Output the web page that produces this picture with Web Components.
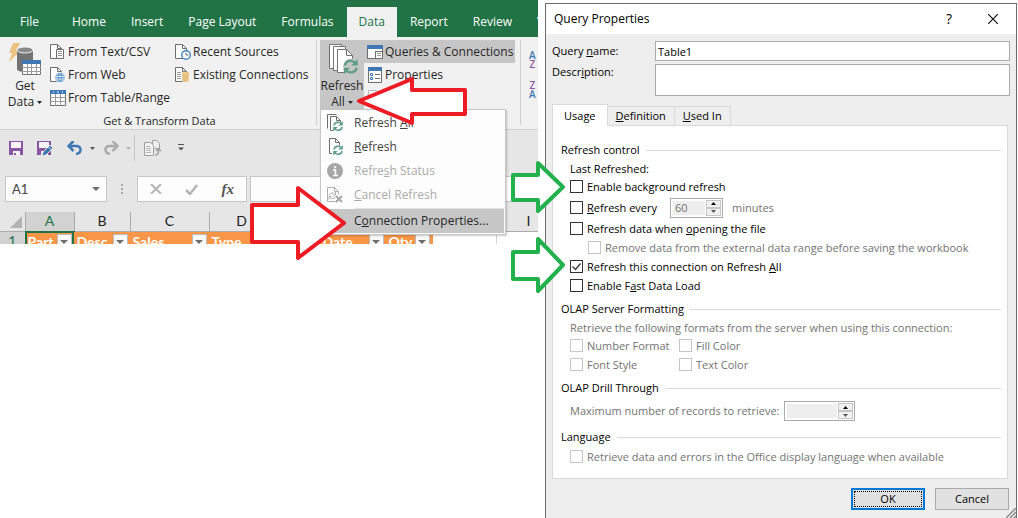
<!DOCTYPE html>
<html lang="en">
<head>
<meta charset="utf-8">
<meta name="viewport" content="width=device-width, initial-scale=1">
<title>Query Properties</title>
<style>
	html, body {
		margin: 0;
		min-height: 100%;
		background: #fff;
		color: #262626;
		font-family: "Open Sans", "Noto Sans", sans-serif;
		font-size: 12px;
		line-height: 16px;
	}
</style>
</head>
<body>
<app-page></app-page>

<script>
// Shared base, fills an open shadow root from the class's styles and markup
class BaseElement extends HTMLElement {
	constructor() {
		super();
		const shadowDom = this.attachShadow({ mode: "open" });
		const template = document.createElement("template");
		template.innerHTML =
			"<style>* { box-sizing: border-box; } " +
			"button, input, textarea { font: inherit; color: inherit; margin: 0; } " +
			"button { background: none; border: 0; padding: 0; } " +
			"svg { display: block; flex: none; } " +
			this.constructor.styles + "</style>" + this.constructor.markup;
		shadowDom.appendChild(template.content.cloneNode(true));
	}
}

// Icons by name: [width, height, svg content]
const doc = '<path d="M.5.5h7l4 4v10h-11z" fill="#fff" stroke="#6d6d6d"/><path d="M7.5.5v4h4" fill="none" stroke="#6d6d6d"/>';
const refreshArrows = '<path d="M1 4.500C1.600 1 6 .2 8.300 2.800M9 6C8.400 9.500 4 10.300 1.700 7.700" fill="none" stroke="#5f9e86" stroke-width="1.600"/><path d="M9.800 0v4.500H5.300zM.2 10.500V6h4.500z" fill="#5f9e86"/>';
const ICONS = {
	getdata: [32, 32, '<path d="M4 0h7L7 8h4L0 19l3-9H0z" fill="#eac282"/><path d="M8 7v19c0 2 4 3 8 3s8-1 8-3V7z" fill="#737373"/><ellipse cx="16" cy="7" rx="8" ry="3" fill="#8a8a8a" stroke="#f1f1f1"/><path d="M13.500 17.500h18v14h-18z" fill="#fff" stroke="#737373"/><path d="M13 17h19v4H13z" fill="#3f78b5"/><path d="M13 24.500h19M13 28.500h19M18.500 21v10M22.500 21v10M27.500 21v10" stroke="#9b9b9b" fill="none"/>'],
	csv: [16, 16, '<g>' + doc + '</g><path d="M6.500 5.500h7v9h-7z" fill="#fff" stroke="#6d6d6d"/><path d="M8 7.500h4M8 9.500h4M8 11.500h4" stroke="#8f8f8f"/>'],
	web: [16, 16, doc + '<circle cx="10" cy="10.500" r="5" fill="#3f86c6" stroke="#f1f1f1"/><path d="M6 9.500h8M6 12h8M10 6v9M8 7c-1.500 2-1.500 5 0 7M12 7c1.500 2 1.500 5 0 7" stroke="#fff" stroke-width=".7" fill="none"/>'],
	table: [16, 16, '<path d="M.5.5h15v15H.5z" fill="#fff" stroke="#6d6d6d"/><path d="M0 0h16v4H0z" fill="#3f78b5"/><path d="M3 2h1M7 2h2M12 2h1" stroke="#fff"/><path d="M0 7.500h16M0 11.500h16M5.500 4v12M10.500 4v12" stroke="#9b9b9b"/>'],
	recent: [16, 16, doc + '<circle cx="11" cy="11" r="4.300" fill="#fff" stroke="#3f86c6" stroke-width="1.400"/><path d="M11 8.500V11h2.500" fill="none" stroke="#6d6d6d"/>'],
	existing: [16, 16, doc + '<path d="M2 5.500h4M2 7.500h4M2 9.500h4M2 11.500h4" stroke="#9b9b9b"/><path d="M7 6.500v7c0 2 7 2 7 0v-7z" fill="#e9c07b" stroke="#f1f1f1" stroke-width=".5"/><ellipse cx="10.500" cy="6.500" rx="3.500" ry="1.500" fill="#f0d19b" stroke="#d9a956" stroke-width=".5"/>'],
	refreshbig: [32, 32, '<path d="M3.500 1.500h12v24h-12z" fill="#fff" stroke="#737373"/><path d="M7.500 3.500h12v24h-12z" fill="#fff" stroke="#737373"/><path d="M11.500 6.500h9l6 6v17h-15z" fill="#fff" stroke="#737373"/><path d="M20.500 6.500v6h6" fill="none" stroke="#737373"/><circle cx="25" cy="23.500" r="8" fill="#c6c6c6"/><g transform="translate(17.500 16) scale(1.450)">' + refreshArrows + '</g>'],
	queries: [16, 14, '<path d="M.5.500h15v13H.5z" fill="#fff" stroke="#6d6d6d"/><path d="M0 0h16v4H0z" fill="#3f78b5"/><path d="M8.500 6v8M8 6.500h8" stroke="#6d6d6d"/><path d="M10 8.500h4M10 10.500h4" stroke="#9b9b9b"/>'],
	properties: [14, 16, '<path d="M.5.500h13v15H.5z" fill="#fff" stroke="#6d6d6d"/><path d="M0 0h14v4H0z" fill="#3f78b5"/><path d="M2.500 6.500h2v2h-2zM2.500 10.500h2v2h-2z" fill="none" stroke="#3f78b5"/><path d="M7 7.500h5M7 11.500h5" stroke="#6d6d6d"/>'],
	links: [14, 16, '<path d="M.5.500h8l4 4v10H.5z" fill="#fafafa" stroke="#b5b5b5"/><path d="M3 6.500h7M3 9.500h7" stroke="#c5c5c5"/>'],
	refreshall: [16, 18, '<path d="M.5 14.500V.500h9M6 16.500H3.500v-14h6l4 4v1.500M9.500 2.500v4h4" fill="none" stroke="#6d6d6d"/><g transform="translate(6 7)">' + refreshArrows + '</g>'],
	refresh: [16, 18, '<path d="M5 15.500H2.500V.5h6l4 4v3M8.500.5v4h4" fill="none" stroke="#6d6d6d"/><g transform="translate(6 7)">' + refreshArrows + '</g>'],
	info: [16, 16, '<circle cx="8" cy="8" r="8" fill="#a6a6a6"/><path d="M6 7h2.500v5M6 12.500h5" fill="none" stroke="#fff" stroke-width="1.500"/><path d="M7.200 3.200h2v2h-2z" fill="#fff"/>'],
	cancel: [16, 16, '<path d="M8 14.500H.5V.500h7l4 4v3M7.500.500v4h4" fill="none" stroke="#b0b0b0"/><path d="M2.500 8a2.800 2.800 0 0 1 5-1M8 9.500a2.800 2.800 0 0 1-5 1M8.500 5v3H6M2 12.500v-3h2.500" fill="none" stroke="#b0b0b0"/><path d="M9 9l6 6M15 9l-6 6" stroke="#a6a6a6" stroke-width="2"/>'],
	save: [14, 14, '<path d="M0 0h14v14H0z" fill="#8a55a5"/><path d="M2 1h10v6H2zM4 10h7v4H4z" fill="#f4f4f4"/><path d="M5 12h2v2H5z" fill="#8a55a5"/>'],
	saveas: [16, 15, '<path d="M0 0h14v14H0z" fill="#8a55a5"/><path d="M2 1h10v6H2zM4 10h7v4H4z" fill="#f4f4f4"/><path d="M5 15l1-4 7-7 3 3-7 7z" fill="#3f78b5" stroke="#e6e6e6"/><path d="M11.500 6l2.500 2.500" stroke="#e6e6e6"/>'],
	undo: [16, 14, '<path d="M2 5h7c6 0 6 7 0 8" fill="none" stroke="#3f78b5" stroke-width="2.500"/><path d="M6.500 0L1.500 5l5 5" fill="none" stroke="#3f78b5" stroke-width="2.500"/>'],
	redo: [16, 14, '<path d="M14 5H7c-6 0-6 7 0 8" fill="none" stroke="#ababab" stroke-width="2.500"/><path d="M9.500 0l5 5-5 5" fill="none" stroke="#ababab" stroke-width="2.500"/>'],
	paste: [18, 16, '<path d="M8.500 5V.500h4l3 3v5h-5" fill="#eee" stroke="#a0a0a0"/><path d="M.5 2.500h6l3 3v10H.5z" fill="#f3f3f3" stroke="#a0a0a0"/><path d="M2 6.500h4M2 8.500h5M2 10.500h5M2 12.500h5" stroke="#b5b5b5"/><path d="M11 15c3 0 4-2 3.500-6M12 11l2.500-2.500L17 11" fill="none" stroke="#a0a0a0" stroke-width="1.500"/>'],
	customize: [6, 8, '<path d="M0 .5h6" stroke="#555"/><path d="M0 3.500h6l-3 3z" fill="#555"/>'],
	caret: [5, 3, '<path d="M0 0h5L2.500 3z" fill="currentColor"/>'],
	bigcaret: [8, 4, '<path d="M0 0h8L4 4z" fill="#6d6d6d"/>'],
	cross: [12, 10, '<path d="M1 0l10 10M11 0L1 10" stroke="#b5b5b5" stroke-width="2"/>'],
	check: [13, 11, '<path d="M1 6l4 4 7-9" fill="none" stroke="#b5b5b5" stroke-width="2.500"/>'],
	close: [10, 10, '<path d="M0 0l10 10M10 0L0 10" stroke="#111" stroke-width="1.200"/>']
};

// <app-icon name="save">
class AppIcon extends BaseElement {
	static styles = ":host { display: block; flex: none; }";
	static markup = "";
	static observedAttributes = ["name"];
	attributeChangedCallback() {
		const [w, h, body] = ICONS[this.getAttribute("name")];
		const old = this.shadowRoot.querySelector("svg");
		if (old) old.remove();
		this.shadowRoot.innerHTML += `<svg width="${w}" height="${h}" viewBox="0 0 ${w} ${h}" aria-hidden="true">${body}</svg>`;
	}
}
customElements.define("app-icon", AppIcon);

// Block arrow, one shape per variant
class CalloutArrow extends BaseElement {
	static styles = `
		:host { display: block; position: absolute; z-index: 5; pointer-events: none; }
		path { fill: #fff; stroke: currentColor; stroke-width: 4; stroke-linejoin: round; }
	`;
	static markup = "";
	connectedCallback() {
		const shapes = {
			menu: [112, 50, "M3 25L56 3V14H109V38H56V47Z"],
			item: [96, 76, "M2 20H48V3L94 38L48 73V57H2Z"],
			small: [56, 54, "M3 15H28V3L53 27L28 51V40H3Z"],
			large: [56, 58, "M3 16H28V3L53 29L28 55V43H3Z"]
		};
		const [w, h, d] = shapes[this.getAttribute("shape")];
		this.shadowRoot.innerHTML += `<svg width="${w}" height="${h}" viewBox="0 0 ${w} ${h}" aria-hidden="true"><path d="${d}"/></svg>`;
	}
}
customElements.define("callout-arrow", CalloutArrow);

class RibbonTabs extends BaseElement {
	static styles = `
		:host { display: block; background: #217346; color: #fff; padding-top: 7px; }
		nav { display: flex; gap: 1px; height: 30px; }
		button { padding: 0 12px; white-space: nowrap; }
		.file { padding: 0 20px; }
		.active { background: #f1f1f1; color: #217346; }
	`;
	static markup = `
		<nav aria-label="Ribbon">
			<button class="file">File</button><button>Home</button><button>Insert</button>
			<button>Page Layout</button><button>Formulas</button><button class="active">Data</button>
			<button>Report</button><button>Review</button><button>View</button>
		</nav>
	`;
}
customElements.define("ribbon-tabs", RibbonTabs);

// Small ribbon command, icon on the left
class RibbonCommand extends BaseElement {
	static styles = `
		:host { display: block; }
		:host([pressed]) { background: #c6c6c6; }
		button { display: flex; align-items: center; gap: 2px; height: 23px; padding: 0 2px; white-space: nowrap; }
		span { display: grid; place-items: center; width: 17px; }
	`;
	static markup = `<button><span><slot name="icon"></slot></span><slot></slot></button>`;
}
customElements.define("ribbon-command", RibbonCommand);

// Large ribbon command, icon above a two-line label
class RibbonLarge extends BaseElement {
	static styles = `
		:host { display: block; }
		:host([pressed]) { background: #c6c6c6; }
		button { display: flex; flex-direction: column; align-items: center; width: 44px; height: 69px; padding-top: 3px; }
		.label { padding-top: 3px; }
		.more { display: flex; align-items: center; gap: 3px; }
	`;
	static markup = `
		<button><slot name="icon"></slot><span class="label"><slot></slot></span>
		<span class="more"><slot name="more"></slot><app-icon name="caret"></app-icon></span></button>
	`;
}
customElements.define("ribbon-large", RibbonLarge);

class MenuItem extends BaseElement {
	static styles = `
		:host { display: block; color: #444; }
		:host([disabled]) { color: #ababab; }
		:host([active]) { background: #c6c6c6; color: #262626; }
		button { display: grid; grid-template-columns: 16px 1fr; gap: 11px; align-items: center; width: 100%; height: 24px; padding: 0 5px; text-align: left; white-space: nowrap; }
		.icon { display: grid; place-items: center; }
	`;
	static markup = `<button role="menuitem"><span class="icon"><slot name="icon"></slot></span><span><slot></slot></span></button>`;
}
customElements.define("menu-item", MenuItem);

class RefreshMenu extends BaseElement {
	static styles = `
		:host { display: block; width: 186px; padding: 1px; background: #fdfdfd; border: 1px solid #c6c6c6; box-shadow: 1px 1px 2px #0003; }
		hr { border: 0; border-top: 1px solid #e1e1e1; margin: 1px 0 0 33px; }
	`;
	static markup = `
		<div role="menu" aria-label="Refresh All">
			<menu-item><app-icon slot="icon" name="refreshall"></app-icon>Refresh <u>A</u>ll</menu-item>
			<menu-item><app-icon slot="icon" name="refresh"></app-icon><u>R</u>efresh</menu-item>
			<menu-item disabled><app-icon slot="icon" name="info"></app-icon>Refre<u>s</u>h Status</menu-item>
			<menu-item disabled><app-icon slot="icon" name="cancel"></app-icon><u>C</u>ancel Refresh</menu-item>
			<hr>
			<menu-item active>C<u>o</u>nnection Properties...</menu-item>
		</div>
	`;
}
customElements.define("refresh-menu", RefreshMenu);

class RibbonPanel extends BaseElement {
	static styles = `
		:host { display: block; background: #f1f1f1; border-bottom: 1px solid #d0d0d0; }
		.groups { display: flex; height: 92px; padding-top: 3px; }
		.group { flex: none; border-right: 1px solid #d0d0d0; margin-bottom: 4px; }
		.transform { width: 317px; padding-left: 3px; }
		.connections { position: relative; width: 204px; padding-left: 3px; }
		.row { display: flex; }
		.first { width: 125px; }
		.title { text-align: center; font-size: 11px; line-height: 24px; margin: 0; }
		refresh-menu { position: absolute; z-index: 3; left: 3px; top: 69px; }
		.sort { display: grid; align-content: start; gap: 12px; padding: 11px 0 0 8px; font-size: 10px; line-height: 9px; }
		.sort button { display: grid; font-weight: 600; }
		.a { color: #3f78b5; }
		.z { color: #8a55a5; }
	`;
	static markup = `
		<div class="groups">
			<section class="group transform">
				<div class="row">
					<ribbon-large><app-icon slot="icon" name="getdata"></app-icon>Get<span slot="more">Data</span></ribbon-large>
					<div class="first">
						<ribbon-command><app-icon slot="icon" name="csv"></app-icon>From Text/CSV</ribbon-command>
						<ribbon-command><app-icon slot="icon" name="web"></app-icon>From Web</ribbon-command>
						<ribbon-command><app-icon slot="icon" name="table"></app-icon>From Table/Range</ribbon-command>
					</div>
					<div>
						<ribbon-command><app-icon slot="icon" name="recent"></app-icon>Recent Sources</ribbon-command>
						<ribbon-command><app-icon slot="icon" name="existing"></app-icon>Existing Connections</ribbon-command>
					</div>
				</div>
				<p class="title">Get &amp; Transform Data</p>
			</section>
			<section class="group connections">
				<div class="row">
					<ribbon-large pressed><app-icon slot="icon" name="refreshbig"></app-icon>Refresh<span slot="more">All</span></ribbon-large>
					<div>
						<ribbon-command pressed><app-icon slot="icon" name="queries"></app-icon>Queries &amp; Connections</ribbon-command>
						<ribbon-command><app-icon slot="icon" name="properties"></app-icon>Properties</ribbon-command>
						<ribbon-command aria-label="Edit Links"><app-icon slot="icon" name="links"></app-icon></ribbon-command>
					</div>
				</div>
				<refresh-menu></refresh-menu>
			</section>
			<section class="sort">
				<button aria-label="Sort A to Z"><span class="a">A</span><span class="z">Z</span></button>
				<button aria-label="Sort Z to A"><span class="z">Z</span><span class="a">A</span></button>
			</section>
		</div>
	`;
}
customElements.define("ribbon-panel", RibbonPanel);

class QuickAccess extends BaseElement {
	static styles = `
		:host { display: flex; align-items: center; height: 36px; padding-left: 9px; color: #555; }
		button { display: flex; align-items: center; gap: 7px; margin-right: 14px; }
		.undo { margin-right: 8px; }
		.off { color: #b5b5b5; margin-right: 3px; }
		i { width: 1px; height: 26px; background: #c6c6c6; margin-right: 9px; }
		.paste { margin-right: 16px; }
	`;
	static markup = `
		<button aria-label="Save"><app-icon name="save"></app-icon></button>
		<button aria-label="Save As"><app-icon name="saveas"></app-icon></button>
		<button class="undo" aria-label="Undo"><app-icon name="undo"></app-icon><app-icon name="caret"></app-icon></button>
		<button class="off" aria-label="Redo"><app-icon name="redo"></app-icon><app-icon name="caret"></app-icon></button>
		<i></i>
		<button class="paste" aria-label="Paste"><app-icon name="paste"></app-icon></button>
		<button aria-label="Customize"><app-icon name="customize"></app-icon></button>
	`;
}
customElements.define("quick-access", QuickAccess);

class FormulaBar extends BaseElement {
	static styles = `
		:host { display: flex; height: 26px; margin: 10px 0; padding-left: 5px; }
		.name, .tools, .formula { background: #fdfdfd; border: 1px solid #c6c6c6; }
		.name { display: flex; align-items: center; width: 102px; padding: 0 6px; font-family: Lato, sans-serif; font-size: 13px; }
		.name input { flex: 1; min-width: 0; border: 0; padding: 0; background: none; color: #444; }
		.dots { width: 30px; display: grid; place-items: center; }
		.tools { display: flex; align-items: center; justify-content: space-between; width: 110px; padding: 0 12px; margin-right: 3px; }
		.fx { font: italic bold 15px "Liberation Serif", serif; color: #555; }
		.formula { flex: 1; min-width: 0; border-right: 0; }
	`;
	static markup = `
		<div class="name"><input aria-label="Name Box" value="A1"><app-icon name="bigcaret"></app-icon></div>
		<div class="dots"><svg width="2" height="10" aria-hidden="true"><path d="M0 0h2v2H0zM0 4h2v2H0zM0 8h2v2H0z" fill="#ababab"/></svg></div>
		<div class="tools">
			<button aria-label="Cancel"><app-icon name="cross"></app-icon></button>
			<button aria-label="Enter"><app-icon name="check"></app-icon></button>
			<button class="fx" aria-label="Insert Function">fx</button>
		</div>
		<input class="formula" aria-label="Formula">
	`;
}
customElements.define("formula-bar", FormulaBar);

class SheetGrid extends BaseElement {
	static styles = `
		:host { display: block; height: 32px; overflow: hidden; font-family: Lato, sans-serif; }
		table { border-collapse: collapse; table-layout: fixed; width: 561px; background: #fff; }
		th, td { padding: 0; border-right: 1px solid #d4d4d4; overflow: hidden; }
		thead th { height: 19px; background: #e6e6e6; border-right-color: #ababab; border-bottom: 1px solid #ababab; font-weight: 400; font-size: 14px; color: #222; }
		thead .on, tbody th { background: #d2d2d2; color: #217346; }
		.on { border-bottom-color: #217346; }
		.corner svg { margin: 2px 3px 0 auto; }
		tbody th { font-weight: 400; font-size: 14px; line-height: 18px; vertical-align: top; }
		.head { background: #f79646; color: #fff; border-color: #f79646; }
		.head div { display: flex; justify-content: space-between; padding: 1px 2px 0; height: 22px; font-size: 14px; font-weight: 700; line-height: 18px; }
		.head button { display: grid; place-items: center; width: 15px; height: 16px; margin-top: 1px; background: #fafafa; border: 1px solid #bbb; }
		.selected { outline: 2px solid #217346; outline-offset: -2px; }
	`;
	static markup = `
		<table>
			<colgroup><col style="width:25px"><col style="width:49px"><col style="width:56px"><col style="width:79px"><col style="width:65px"><col style="width:46px"><col style="width:66px"><col style="width:46px"><col style="width:64px"><col style="width:65px"></colgroup>
			<thead><tr><th class="corner"><svg width="12" height="12" aria-hidden="true"><path d="M12 0v12H0z" fill="#b3b3b3"/></svg></th><th class="on">A</th><th>B</th><th>C</th><th>D</th><th></th><th></th><th></th><th></th><th>I</th></tr></thead>
			<tbody><tr><th>1</th></tr></tbody>
		</table>
	`;
	connectedCallback() {
		const row = this.shadowRoot.querySelector("tbody tr");
		for (const name of ["Part", "Desc", "Sales", "Type", "", "Date", "Qty"]) {
			const cell = document.createElement("td");
			cell.className = name === "Part" ? "head selected" : "head";
			cell.innerHTML = `<div>${name}<button aria-label="Filter ${name}"><app-icon name="bigcaret"></app-icon></button></div>`;
			row.appendChild(cell);
		}
		row.append(document.createElement("td"), document.createElement("td"));
	}
}
customElements.define("sheet-grid", SheetGrid);

class ExcelWindow extends BaseElement {
	static styles = `
		:host { display: block; position: relative; }
		.window { background: #e6e6e6; overflow: hidden; }
		callout-arrow { color: #ed1c24; }
		.to-menu { left: 356px; top: 76px; }
		.to-item { left: 250px; top: 185px; }
	`;
	static markup = `
		<div class="window">
			<ribbon-tabs></ribbon-tabs>
			<ribbon-panel></ribbon-panel>
			<quick-access></quick-access>
			<formula-bar></formula-bar>
			<sheet-grid></sheet-grid>
		</div>
		<callout-arrow class="to-menu" shape="menu"></callout-arrow>
		<callout-arrow class="to-item" shape="item"></callout-arrow>
	`;
}
customElements.define("excel-window", ExcelWindow);

// <check-option checked disabled>Label</check-option>
class CheckOption extends BaseElement {
	static styles = `
		:host { display: block; }
		:host([disabled]) { color: #737373; }
		label { display: flex; align-items: center; gap: 4px; height: 19px; white-space: nowrap; }
		input { appearance: none; flex: none; width: 13px; height: 13px; border: 1px solid #333; background: #fff; }
		input:disabled { border-color: #c6c6c6; }
		input:checked { background: #fff url('data:image/svg+xml,<svg xmlns="http://www.w3.org/2000/svg" viewBox="0 0 11 11"><path d="M1.500 5.500l3 3 5-6" fill="none" stroke="%23333" stroke-width="1.300"/></svg>'); }
	`;
	static markup = `<label><input type="checkbox"><span><slot></slot></span></label>`;
	connectedCallback() {
		const input = this.shadowRoot.querySelector("input");
		input.checked = this.hasAttribute("checked");
		input.disabled = this.hasAttribute("disabled");
	}
}
customElements.define("check-option", CheckOption);

class NumberSpinner extends BaseElement {
	static styles = `
		:host { display: flex; width: 53px; height: 20px; padding: 1px; border: 1px solid #ababab; background: #fff; color: #737373; }
		:host([wide]) { width: 71px; }
		input { flex: 1; min-width: 0; padding: 0 2px; background: #eee; border: 1px solid #fff; }
		.steps { display: grid; grid-template-rows: 1fr 1fr; width: 15px; }
		button { display: grid; place-items: center; border: 1px solid #c6c6c6; background: #f1f1f1; color: #555; }
		.up { color: #000; }
		.up app-icon { rotate: 180deg; }
	`;
	static markup = `
		<input type="text" inputmode="numeric" disabled>
		<div class="steps">
			<button class="up" aria-label="Increase"><app-icon name="caret"></app-icon></button>
			<button aria-label="Decrease"><app-icon name="caret"></app-icon></button>
		</div>
	`;
	connectedCallback() {
		const input = this.shadowRoot.querySelector("input");
		input.value = this.getAttribute("value") || "";
		input.setAttribute("aria-label", this.getAttribute("label"));
	}
}
customElements.define("number-spinner", NumberSpinner);

// Titled section of the dialog with a rule after its title
class OptionGroup extends BaseElement {
	static styles = `
		:host { display: block; }
		h3 { display: flex; align-items: center; gap: 6px; margin: 0; font: inherit; line-height: 18px; color: #000; }
		h3::after { content: ""; flex: 1; height: 1px; background: #d9d9d9; }
		.content { padding-left: 9px; }
	`;
	static markup = `<h3><slot name="title"></slot></h3><div class="content"><slot></slot></div>`;
}
customElements.define("option-group", OptionGroup);

class UsagePanel extends BaseElement {
	static styles = `
		:host { display: block; padding: 15px 6px 12px 8px; background: #fff; border: 1px solid #d9d9d9; color: #000; }
		p { margin: 0; padding-top: 2px; line-height: 16px; }
		u { text-underline-offset: 1px; }
		.every, .records { display: flex; align-items: center; }
		.every { gap: 13px; height: 23px; }
		.every number-spinner { margin-right: -4px; }
		.off, .records, .every span { color: #737373; }
		.indent { padding-left: 18px; }
		.formats { display: grid; grid-template-columns: 109px 1fr; }
		.records { gap: 4px; padding: 4px 0; }
		.server, .drill { margin-top: 5px; }
		.language { margin-top: 3px; }
		.language check-option { padding-top: 1px; }
	`;
	static markup = `
		<option-group class="refresh">
			<span slot="title">Refresh control</span>
			<p>Last Refreshed:</p>
			<check-option>Enable back<u>g</u>round refresh</check-option>
			<div class="every">
				<check-option><u>R</u>efresh every</check-option>
				<number-spinner value="60" label="Refresh interval"></number-spinner>
				<span>minutes</span>
			</div>
			<check-option>Refresh data when <u>o</u>pening the file</check-option>
			<check-option class="indent" disabled>Remove data from the external data range before saving the workbook</check-option>
			<check-option checked>Refresh this connection on Refresh <u>A</u>ll</check-option>
			<check-option>Enable F<u>a</u>st Data Load</check-option>
		</option-group>
		<option-group class="server">
			<span slot="title">OLAP Server Formatting</span>
			<p class="off">Retrieve the following formats from the server when using this connection:</p>
			<div class="formats">
				<check-option disabled>Number Format</check-option>
				<check-option disabled>Fill Color</check-option>
				<check-option disabled>Font Style</check-option>
				<check-option disabled>Text Color</check-option>
			</div>
		</option-group>
		<option-group class="drill">
			<span slot="title">OLAP Drill Through</span>
			<div class="records"><span>Maximum number of records to retrieve:</span><number-spinner wide label="Maximum number of records to retrieve"></number-spinner></div>
		</option-group>
		<option-group class="language">
			<span slot="title">Language</span>
			<check-option disabled>Retrieve data and errors in the Office display language when available</check-option>
		</option-group>
	`;
}
customElements.define("usage-panel", UsagePanel);

class QueryDialog extends BaseElement {
	static styles = `
		:host { display: flex; flex-direction: column; position: relative; margin-top: 3px; min-height: 515px; border: 1px solid #6b6b6b; border-bottom: 0; background: #eee; color: #000; font-size: 11px; }
		header { display: flex; align-items: center; height: 30px; padding: 0 18px 0 8px; background: #fff; font-size: 11px; }
		h2 { flex: 1; margin: 0; font: inherit; font-size: 12px; }
		header button { font-size: 14px; margin-left: 36px; }
		form { display: flex; flex-direction: column; flex: 1; padding: 7px 6px 0 6px; }
		.fields { display: grid; grid-template-columns: 103px 1fr; gap: 3px 0; }
		.fields label { line-height: 20px; }
		.fields label[for=description] { line-height: 16px; }
		.fields input, .fields textarea { display: block; width: 100%; height: 20px; border: 1px solid #ababab; background: #fff; padding: 0 2px; resize: none; }
		.fields textarea { height: 32px; }
		.tabs { display: flex; align-items: end; height: 30px; padding-top: 8px; z-index: 1; }
		.tabs button { height: 20px; padding: 0 8px; border: 1px solid #d9d9d9; border-left: 0; }
		.tabs .active { height: 22px; padding: 0 11px; border-left: 1px solid #d9d9d9; border-bottom: 0; background: #fff; }
		usage-panel { margin: -1px 2px 0 0; }
		footer { display: flex; justify-content: end; gap: 10px; padding: 9px 1px 8px; }
		footer button { width: 74px; height: 22px; border: 1px solid #ababab; background: #e1e1e1; }
		footer .ok { border: 2px solid #0078d7; outline: 1px dotted #000; outline-offset: -4px; }
		.grip { position: absolute; right: 0; bottom: 0; }
		callout-arrow { color: #22b14c; }
		.to-background { left: -36px; top: 156px; }
		.to-connection { left: -36px; top: 232px; }
	`;
	static markup = `
		<header><h2>Query Properties</h2><button aria-label="Help">?</button><button aria-label="Close"><app-icon name="close"></app-icon></button></header>
		<form>
			<div class="fields">
				<label for="name">Query <u>n</u>ame:</label><input id="name" value="Table1">
				<label for="description">Descr<u>i</u>ption:</label><textarea id="description"></textarea>
			</div>
			<div class="tabs" role="tablist">
				<button type="button" role="tab" class="active">Usa<u>g</u>e</button><button type="button" role="tab"><u>D</u>efinition</button><button type="button" role="tab"><u>U</u>sed In</button>
			</div>
			<usage-panel></usage-panel>
			<footer><button type="button" class="ok">OK</button><button type="button">Cancel</button></footer>
		</form>
		<svg class="grip" width="10" height="10" aria-hidden="true"><path d="M0 10L10 0M4 10l6-6M8 10l2-2" stroke="#8a8a8a" stroke-width="1.500"/></svg>
		<callout-arrow class="to-background" shape="small"></callout-arrow>
		<callout-arrow class="to-connection" shape="large"></callout-arrow>
	`;
}
customElements.define("query-dialog", QueryDialog);

class AppPage extends BaseElement {
	static styles = `
		:host { display: grid; grid-template-columns: minmax(0, 538fr) minmax(0, 472fr); column-gap: 7px; padding-right: 1px; align-items: start; overflow: hidden; }
	`;
	static markup = `<excel-window></excel-window><query-dialog></query-dialog>`;
}
customElements.define("app-page", AppPage);
</script>
</body>
</html>
